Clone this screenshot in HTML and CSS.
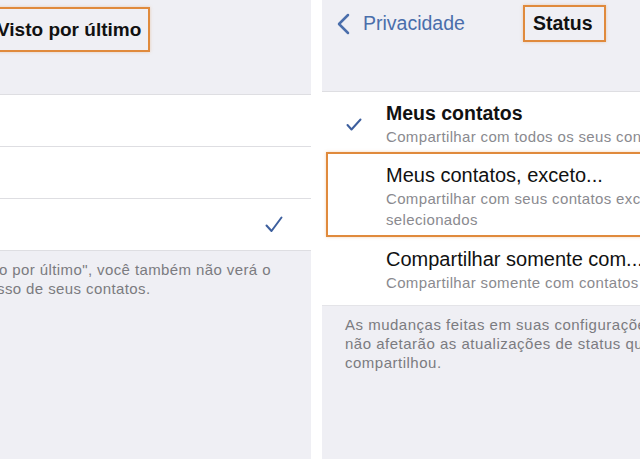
FILE: index.html
```html
<!DOCTYPE html>
<html lang="pt-BR">
<head>
    <meta charset="UTF-8">
    <meta name="viewport" content="width=device-width, initial-scale=1.0">
    <title>Privacidade - Status</title>
    <link rel="stylesheet" href="styles.css">
</head>
<body>
    <div class="shot">
        <!-- left screen: Visto por ultimo -->
        <section class="panel panel-left">
            <header class="nav">
                <h1 class="title hl title-left">Visto por último</h1>
            </header>
            <ul class="list">
                <li class="row"></li>
                <li class="row"></li>
                <li class="row row-checked">
                    <svg class="check" width="18" height="17" viewBox="0 0 18 17">
                        <path d="M1.5 9.5 L6.5 15 L16.5 1.5" fill="none" stroke="currentColor" stroke-width="2" stroke-linecap="round" stroke-linejoin="round"/>
                    </svg>
                </li>
            </ul>
            <p class="note note-left">
                <span class="cut cut-1">o por último", você também não verá o</span><br>
                <span class="cut cut-2">sso de seus contatos.</span>
            </p>
        </section>

        <!-- right screen: Status -->
        <section class="panel panel-right">
            <header class="nav nav-right">
                <a class="back" href="#">
                    <svg class="chevron" width="14" height="22" viewBox="0 0 14 22">
                        <path d="M12 2 L3 11 L12 20" fill="none" stroke="currentColor" stroke-width="2.5" stroke-linecap="round" stroke-linejoin="round"/>
                    </svg>
                    <span>Privacidade</span>
                </a>
                <h1 class="title hl title-right">Status</h1>
            </header>
            <ul class="list options">
                <li class="option option-first">
                    <span class="mark">
                        <svg width="16" height="13" viewBox="0 0 16 13">
                            <path d="M1.5 7 L5.5 11.5 L14.5 1.5" fill="none" stroke="currentColor" stroke-width="2" stroke-linecap="round" stroke-linejoin="round"/>
                        </svg>
                    </span>
                    <div class="opt-text">
                        <div class="opt-title opt-title-strong">Meus contatos</div>
                        <div class="opt-sub">Compartilhar com todos os seus contatos</div>
                    </div>
                </li>
                <li class="option hl option-boxed">
                    <span class="mark"></span>
                    <div class="opt-text">
                        <div class="opt-title">Meus contatos, exceto...</div>
                        <div class="opt-sub">Compartilhar com seus contatos exceto os<br>selecionados</div>
                    </div>
                </li>
                <li class="option option-last">
                    <span class="mark"></span>
                    <div class="opt-text">
                        <div class="opt-title">Compartilhar somente com...</div>
                        <div class="opt-sub">Compartilhar somente com contatos selecionados</div>
                    </div>
                </li>
            </ul>
            <p class="note note-right">
                As mudanças feitas em suas configurações de privacidade<br>
                não afetarão as atualizações de status que você já<br>
                compartilhou.
            </p>
        </section>
    </div>
</body>
</html>
```

FILE: styles.css
```css
body {
    margin: 0;
    background: #fff;
    font-family: "Liberation Sans", Arial, sans-serif;
    color: #111;
}
.shot {
    display: flex;
    gap: 11px;
    width: 640px;
    height: 459px;
    overflow: hidden;
}
.panel {
    background: #efeff4;
    overflow: hidden;
}
.panel-left {
    width: 311px;
    flex: none;
}
.panel-right {
    flex: 1;
    min-width: 0;
}

/* nav bars */
.nav {
    height: 94px;
    padding-top: 7px;
    box-sizing: border-box;
    display: flex;
    align-items: flex-start;
}
.nav-right {
    height: 91px;
    padding-top: 5px;
    padding-left: 14px;
}
.title {
    margin: 0;
    font-size: 19px;
    font-weight: bold;
    white-space: nowrap;
}
.hl {
    border: 2px solid #e08a3c;
    box-shadow: 0 0 3px rgba(224, 138, 60, 0.35);
}
.title-left {
    margin-left: -12px;
    height: 45px;
    box-sizing: border-box;
    padding: 0 7px;
    display: flex;
    align-items: center;
}
.title-right {
    margin-left: 58px;
    height: 37px;
    box-sizing: border-box;
    padding: 0 11px 0 8px;
    display: flex;
    align-items: center;
    font-size: 19.5px;
}
.back {
    display: flex;
    align-items: center;
    gap: 13px;
    height: 37px;
    color: #4a6eab;
    text-decoration: none;
    font-size: 19.5px;
}
.chevron {
    display: block;
}

/* lists */
.list {
    list-style: none;
    margin: 0;
    padding: 0;
    background: #fff;
    border-top: 1px solid #dedee2;
}
.row {
    height: 51px;
    border-bottom: 1px solid #dedee2;
    display: flex;
    align-items: center;
    justify-content: flex-end;
    padding-right: 28px;
}
.check {
    color: #3d5f9e;
    display: block;
}

.options {
    border-bottom: 1px solid #e4e4e8;
}
.option {
    display: grid;
    grid-template-columns: 64px 1fr;
    align-items: center;
}
.option-first {
    padding: 9px 0 5px;
}
.option-boxed {
    margin: 0 -20px 0 4px;
    grid-template-columns: 58px 1fr;
    padding: 9px 0 5px;
}
.option-last {
    padding: 10px 0 12px;
}
.mark {
    display: flex;
    justify-content: center;
    padding-right: 0;
    color: #3d5f9e;
}
.opt-text {
    white-space: nowrap;
}
.opt-title {
    font-size: 20px;
    line-height: 25px;
}
.opt-title-strong {
    font-weight: bold;
    font-size: 19.5px;
}
.opt-sub {
    font-size: 15px;
    line-height: 21px;
    letter-spacing: 0.35px;
    color: #8a8a8f;
}

/* footers */
.note {
    margin: 0;
    font-size: 15px;
    line-height: 19px;
    letter-spacing: 0.4px;
    color: #7b7b80;
    white-space: nowrap;
}
.note-left {
    padding-top: 9px;
}
.cut-1 {
    margin-left: -1px;
}
.cut-2 {
    margin-left: -3px;
}
.note-right {
    padding: 9px 0 0 23px;
    letter-spacing: 0.5px;
}
```
